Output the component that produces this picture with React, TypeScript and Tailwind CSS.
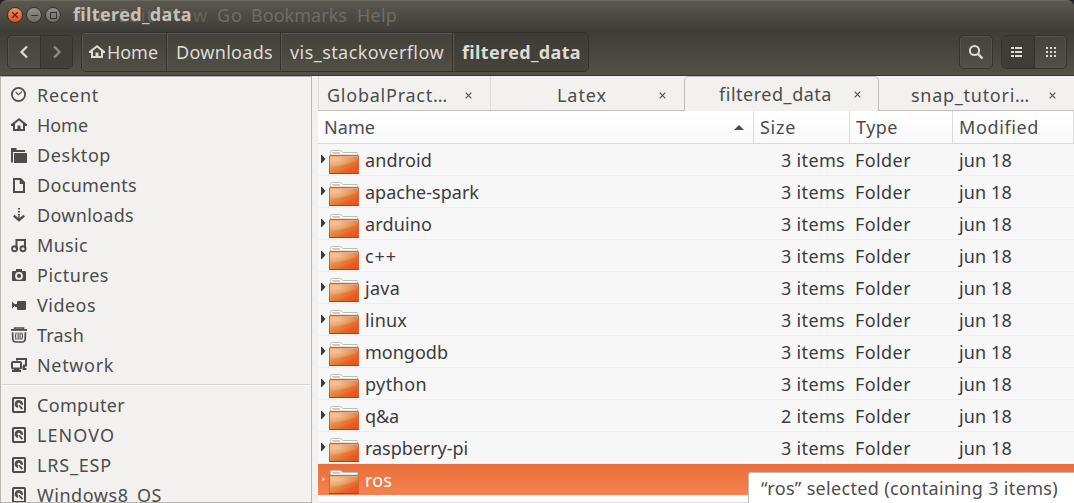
import { useLayoutEffect, useRef, type ReactNode } from "react";

/** A single-line label whose tracking is adjusted to fill a given width. */
function Label({ text, w, className = "" }: { text: string; w: number; className?: string }) {
  const ref = useRef<HTMLSpanElement>(null);
  useLayoutEffect(() => {
    const el = ref.current;
    if (!el) return;
    el.style.letterSpacing = "0px";
    const range = document.createRange();
    range.selectNodeContents(el);
    const natural = range.getBoundingClientRect().width;
    el.style.letterSpacing = `${(w - natural) / text.length}px`;
  }, [text, w]);
  return (
    <span ref={ref} className={`inline-block shrink-0 whitespace-pre ${className}`}>
      {text}
    </span>
  );
}

const icons: Record<string, ReactNode> = {
  recent: (
    <>
      <circle cx="7.5" cy="7.5" r="6.6" fill="none" stroke="currentColor" strokeWidth="1.8" />
      <path d="M4.7 5 7.5 7.6 11 4.6" fill="none" stroke="currentColor" strokeWidth="1.2" />
    </>
  ),
  home: (
    <path
      fillRule="evenodd"
      d="M8 1 16 7.2V9H14V14H2V9H0V7.2ZM8 3.4 4 6.7V12H6.5V8.5H9.5V12H12V6.7Z"
    />
  ),
  desktop: <path d="M0 1H5.5V3H14V5H2V15.5H0ZM3 6H16V16H3Z" />,
  documents: (
    <path fillRule="evenodd" d="M2 1H10L14 5V16H2ZM4 3V14H12V7H8.7V3Z" />
  ),
  downloads: (
    <>
      <path d="M7 1H9V2.5H7ZM7 4H9V5.5H7ZM7 7H9V8.5H7ZM7.3 9H8.7V13H7.3Z" />
      <path d="M2.8 8.6 8 13.2 13.2 8.6" fill="none" stroke="currentColor" strokeWidth="2.3" />
    </>
  ),
  music: (
    <>
      <path d="M5.5 12V3H14V11" fill="none" stroke="currentColor" strokeWidth="2" />
      <circle cx="3.6" cy="11.7" r="2.5" fill="none" stroke="currentColor" strokeWidth="1.9" />
      <circle cx="12" cy="11.7" r="2.5" fill="none" stroke="currentColor" strokeWidth="1.9" />
    </>
  ),
  pictures: (
    <>
      <path
        fillRule="evenodd"
        d="M5 2H11V4H14Q15 4 15 5V13Q15 14 14 14H2Q1 14 1 13V5Q1 4 2 4H5ZM8 5A3.9 3.9 0 1 0 8 12.8 3.9 3.9 0 1 0 8 5Z"
      />
      <circle cx="8" cy="8.9" r="2.1" />
    </>
  ),
  videos: <path d="M1 4.5 4.5 8 1 11.8ZM4 7H6V5Q6 4 7 4H14Q15 4 15 5V12Q15 13 14 13H7Q6 13 6 12V10H4Z" />,
  trash: (
    <>
      <path d="M3.5 2.5V1H12.5V2.5" fill="none" stroke="currentColor" strokeWidth="1.5" />
      <path d="M0 2H16V3.8H0Z" />
      <path d="M1.6 5.2 1.8 12Q2.2 15 4.5 15H11.5Q13.8 15 14.2 12L14.4 5.2" fill="none" stroke="currentColor" strokeWidth="1.7" />
      <path d="M5.2 5.5Q3.6 9 5.2 12.8M10.8 5.5Q12.4 9 10.8 12.8M7.1 5.5V12.8M9.1 5.5V12.8" fill="none" stroke="currentColor" strokeWidth="1.1" />
    </>
  ),
  network: (
    <>
      <path d="M6 3.5V2H15V8.5H12" fill="none" stroke="currentColor" strokeWidth="2" />
      <path d="M11.5 9H14V11H15.5V13H11.5Z" />
      <rect x="1" y="5" width="9" height="6.5" rx="1" fill="none" stroke="currentColor" strokeWidth="2" />
      <path d="M3 12H8V13H10V15H1V13H3Z" />
    </>
  ),
  disk: (
    <>
      <rect x="2" y="1" width="12" height="14" rx="0.8" fill="none" stroke="currentColor" strokeWidth="2" />
      <path
        fillRule="evenodd"
        d="M8 3A4 4 0 0 0 5 10L7 10.9 7.3 8.6A1.5 1.5 0 1 1 9.4 7.2L11.8 8.3A4 4 0 0 0 8 3Z"
      />
      <path d="M7.6 7.8 9.5 8.6 12 11.6 10.8 12.8 8.7 10.6Z" />
    </>
  ),
};

function Icon({ name, className = "" }: { name: string; className?: string }) {
  return (
    <svg viewBox="0 0 16 16" className={`h-4 w-4 shrink-0 ${className}`} fill="currentColor">
      {icons[name]}
    </svg>
  );
}

const places: [string, string, number][] = [
  ["recent", "Recent", 62],
  ["home", "Home", 51],
  ["desktop", "Desktop", 74],
  ["documents", "Documents", 100],
  ["downloads", "Downloads", 97],
  ["music", "Music", 51],
  ["pictures", "Pictures", 72],
  ["videos", "Videos", 59],
  ["trash", "Trash", 47],
  ["network", "Network", 77],
];

const devices: [string, string, number][] = [
  ["disk", "Computer", 88],
  ["disk", "LENOVO", 78],
  ["disk", "LRS_ESP", 75],
  ["disk", "Windows8_OS", 125],
];

const folders: [string, number, string][] = [
  ["android", 67, "3 items"],
  ["apache-spark", 114, "3 items"],
  ["arduino", 67, "3 items"],
  ["c++", 32, "3 items"],
  ["java", 35, "3 items"],
  ["linux", 42, "3 items"],
  ["mongodb", 83, "3 items"],
  ["python", 62, "3 items"],
  ["q&a", 34, "2 items"],
  ["raspberry-pi", 103, "3 items"],
];

function Place({ item }: { item: [string, string, number] }) {
  return (
    <li className="flex h-[30px] items-center gap-[10px] pl-[10px]">
      <Icon name={item[0]} />
      <Label text={item[1]} w={item[2]} />
    </li>
  );
}

function FolderIcon() {
  return (
    <svg viewBox="0 0 30 26" className="h-[26px] w-[30px] shrink-0">
      <defs>
        <linearGradient id="front" x1="0" y1="0" x2="1" y2="1">
          <stop offset="0" stopColor="#ecb876" />
          <stop offset=".4" stopColor="#e39150" />
          <stop offset=".75" stopColor="#ea5c24" />
          <stop offset="1" stopColor="#ee4f1a" />
        </linearGradient>
        <radialGradient id="shine" cx=".22" cy=".3" r=".8">
          <stop offset="0" stopColor="#fbe3b4" stopOpacity=".55" />
          <stop offset="1" stopColor="#f6c89a" stopOpacity=".12" />
        </radialGradient>
      </defs>
      <path d="M1.5 7V2.5Q1.5 1.5 2.5 1.5H11.5L14 3.5H28Q28.5 3.5 28.5 4.5V7Z" fill="#fafafa" stroke="#bcbcbc" />
      <path d="M3.5 3.9H11" stroke="#f0a070" strokeWidth="1.3" />
      <path d="M2 5.5H28" stroke="#e4e4e4" />
      <rect x=".5" y="6.5" width="29" height="18" rx=".5" fill="url(#front)" stroke="#c9683f" />
      <path d="M1 7.5H29" stroke="#efaa7c" strokeWidth="1" />
      <path d="M1 8H29V11Q21 16 1 18Z" fill="url(#shine)" />
      <path d="M0 24.5H30" stroke="#b83b16" />
    </svg>
  );
}

function FolderRow({ name, w, items, selected = false }: { name: string; w: number; items?: string; selected?: boolean }) {
  return (
    <div
      className={
        selected
          ? "flex h-8 shrink-0 border-b border-white bg-linear-to-b from-[#e86f3c] to-[#f6824f] text-white"
          : "flex h-8 shrink-0 border-b border-[#efefef] bg-[#f7f7f7] text-[#3c3c3c]"
      }
    >
      <div className="flex w-[435px] items-center pl-[3px]">
        <svg viewBox="0 0 8 10" className="mb-px h-[10px] w-2 shrink-0" fill="currentColor">
          {selected ? <path d="M1.5 3.5V7L4 5.2Z" /> : <path d="M0 1V9H1L4.5 5 1 1Z" />}
        </svg>
        <div className="mt-[4px] flex">
          <FolderIcon />
        </div>
        <Label text={name} w={w} className="ml-[6px]" />
      </div>
      {items && (
        <>
          <div className="flex w-24 items-center justify-end pr-1">
            <Label text={items} w={64} />
          </div>
          <div className="flex w-[103px] items-center pl-[6px]">
            <Label text="Folder" w={56} />
          </div>
          <div className="flex items-center pl-[7px]">
            <Label text="jun 18" w={53} />
          </div>
        </>
      )}
    </div>
  );
}

function Close({ className }: { className: string }) {
  return (
    <svg viewBox="0 0 7 7" className={`h-[7px] w-[7px] shrink-0 ${className}`} stroke="#555" strokeWidth="1.2">
      <path d="M.7.7 6.3 6.3M6.3.7.7 6.3" />
    </svg>
  );
}

export default function App() {
  return (
    <div className="flex h-[503px] w-[1074px] flex-col overflow-hidden bg-[#23222a] font-['Noto_Sans',sans-serif] text-[18px] leading-6 text-[#4c4c4c]">
      <header className="shrink-0 rounded-t-lg">
        <div className="flex h-[29px] items-center rounded-t-[7px] border-t border-[#6b685f] bg-linear-to-b from-[#5b584e] to-[#403f3a] pl-[7px]">
          <div className="flex gap-1">
            <span className="flex h-4 w-4 items-center justify-center rounded-full border border-[#33312d] bg-linear-to-b from-[#f68a65] to-[#e34d19]">
              <svg viewBox="0 0 8 8" className="h-2 w-2" stroke="#46291e" strokeWidth="1.3"><path d="M1.2 1.2 6.8 6.8M6.8 1.2 1.2 6.8" /></svg>
            </span>
            <span className="ml-[-1px] flex h-4 w-4 items-center justify-center rounded-full border border-[#33312d] bg-linear-to-b from-[#949188] to-[#6e6b63]">
              <span className="h-px w-[7px] bg-[#33312d]" />
            </span>
            <span className="ml-[-1px] flex h-4 w-4 items-center justify-center rounded-full border border-[#33312d] bg-linear-to-b from-[#949188] to-[#6e6b63]">
              <span className="h-[7px] w-[7px] border border-[#33312d]" />
            </span>
          </div>
          <div className="relative ml-[12px] flex text-[#706d64]">
            <span className="flex w-[144px] gap-[10px] pl-1 text-[#66635a]">
              <Label text="File" w={31} />
              <Label text="Edit" w={36} />
              <Label text="View" w={47} className="ml-[-2px]" />
            </span>
            <Label text="Go" w={26} />
            <Label text="Bookmarks" w={96} className="ml-[8px]" />
            <Label text="Help" w={40} className="ml-[10px]" />
            <span className="absolute top-[-1px] left-0 font-bold text-[#c6c2b8]">
              <Label text="filtered_data" w={119} />
            </span>
          </div>
        </div>
        <div className="flex h-[47px] items-start border-b border-[#37352f] bg-linear-to-b from-[#3d3c37] to-[#535046] px-[7px] text-[#dfdbd2]">
          <div className="mt-[6px] flex h-[34px] w-[66px] overflow-hidden rounded-[5px] border border-[#33322e] bg-linear-to-b from-[#45433e] to-[#514f46] shadow-[inset_0_0_0_1px_#56534a]">
            <span className="flex w-8 items-center justify-center">
              <svg viewBox="0 0 10 14" className="h-[14px] w-[10px]" fill="none" stroke="#dfdbd2" strokeWidth="2.2"><path d="M8 1.5 2.5 7 8 12.5" /></svg>
            </span>
            <span className="flex flex-1 items-center justify-center border-l border-[#33322e] bg-[#403f39]">
              <svg viewBox="0 0 10 14" className="h-[14px] w-[10px]" fill="none" stroke="#918e85" strokeWidth="2.2"><path d="M2 1.5 7.5 7 2 12.5" /></svg>
            </span>
          </div>
          <nav className="mt-[3px] ml-2 flex h-10 w-[508px] overflow-hidden rounded-[5px] border border-[#33322e] bg-linear-to-b from-[#42413b] to-[#514f46]">
            <span className="flex w-[85px] items-center border-t border-l border-[#595750] pb-[2px] pl-[6px]">
              <Icon name="home" />
              <Label text="Home" w={51} className="ml-[2px]" />
            </span>
            <span className="flex w-[114px] items-center border-t border-l border-[#595750] pb-[2px] pl-2 shadow-[-1px_0_#33322e]">
              <Label text="Downloads" w={97} />
            </span>
            <span className="flex w-[172px] items-center border-t border-l border-[#595750] pb-[2px] pl-2 shadow-[-1px_0_#33322e]">
              <Label text="vis_stackoverflow" w={154} />
            </span>
            <span className="flex flex-1 items-center border-l border-[#57554d] bg-linear-to-b from-[#3d3c37] to-[#45433c] pb-px pl-[8px] font-bold shadow-[-1px_0_#33322e]">
              <Label text="filtered_data" w={119} />
            </span>
          </nav>
          <span className="mt-[6px] ml-auto flex h-[34px] w-[34px] items-center justify-center rounded-[5px] border border-[#33322e] bg-linear-to-b from-[#45433e] to-[#514f46] shadow-[inset_0_0_0_1px_#56534a]">
            <svg viewBox="0 0 16 16" className="h-4 w-4" fill="none" stroke="#dfdbd2"><circle cx="6.5" cy="6.5" r="4.6" strokeWidth="2" /><path d="M10 10 14.5 14.5" strokeWidth="2.4" /></svg>
          </span>
          <div className="mt-[6px] ml-2 flex h-[34px] w-[66px] overflow-hidden rounded-[5px] border border-[#33322e] bg-linear-to-b from-[#45433e] to-[#514f46] shadow-[inset_0_0_0_1px_#56534a]">
            <span className="flex w-8 items-center justify-center bg-[#3e3d38] pr-[2px]">
              <svg viewBox="0 0 12 10" className="h-[10px] w-3" fill="#dfdbd2"><path d="M0 0h3v2H0zM4 0h7v2H4zM0 4h3v2H0zM4 4h7v2H4zM0 8h3v2H0zM4 8h7v2H4z" /></svg>
            </span>
            <span className="flex flex-1 items-center justify-center border-l border-[#33322e] pl-px">
              <svg viewBox="0 0 10 10" className="h-[10px] w-[10px]" fill="#dfdbd2"><path d="M0 0h2v2H0zM4 0h2v2H4zM8 0h2v2H8zM0 4h2v2H0zM4 4h2v2H4zM8 4h2v2H8zM0 8h2v2H0zM4 8h2v2H4zM8 8h2v2H8z" /></svg>
            </span>
          </div>
        </div>
      </header>

      <div className="flex min-h-0 flex-1 bg-[#f2f1f0]">
        <aside className="flex w-[312px] shrink-0 flex-col overflow-hidden border border-[#b9b6b0]">
          <ul className="pt-[3px]">
            {places.map((p) => <Place key={p[1]} item={p} />)}
          </ul>
          <div className="mt-1 mb-[4px] h-[2px] shrink-0 border-t border-[#d8d6d3] bg-white" />
          <ul>
            {devices.map((p) => <Place key={p[1]} item={p} />)}
          </ul>
        </aside>

        <main className="relative ml-[6px] flex min-w-0 flex-1 flex-col overflow-hidden bg-white">
          <div className="flex h-[35px] shrink-0 bg-[#f2f1f0]">
            <div className="flex w-[173px] items-center border-r border-b border-l border-[#c4c2be] border-x-[#dddbd8] pt-[4px] pl-[8px]">
              <Label text="GlobalPract…" w={121} />
              <Close className="ml-[17px]" />
            </div>
            <div className="flex w-[193px] items-center border-b border-[#c4c2be] pt-[4px] pl-[66px]">
              <Label text="Latex" w={50} />
              <Close className="ml-[52px]" />
            </div>
            <div className="flex w-[195px] items-center rounded-t-[5px] border-x border-t border-[#bfbdb9] pl-[34px]">
              <Label text="filtered_data" w={113} />
              <Close className="ml-[22px]" />
            </div>
            <div className="flex flex-1 items-center border-b border-[#c4c2be] pt-[4px] pl-[32px]">
              <Label text="snap_tutori…" w={119} />
              <Close className="ml-[19px]" />
            </div>
          </div>

          <div className="flex h-[33px] shrink-0 items-stretch border-b border-[#d9d9d9] bg-linear-to-b from-white to-[#f9f9f9] text-[#4c4c4c]">
            <div className="flex w-[436px] items-center border-r border-[#dcdcdc] pl-[6px]">
              <Label text="Name" w={51} />
              <svg viewBox="0 0 10 5" className="mr-[9px] ml-auto h-[5px] w-[10px]" fill="#4c4c4c"><path d="M5 0 10 5H0Z" /></svg>
            </div>
            <div className="flex w-24 items-center border-r border-[#dcdcdc] pl-[6px]"><Label text="Size" w={36} /></div>
            <div className="flex w-[103px] items-center border-r border-[#dcdcdc] pl-[6px]"><Label text="Type" w={42} /></div>
            <div className="flex flex-1 items-center border-r border-[#dcdcdc] pl-[6px]"><Label text="Modified" w={80} /></div>
          </div>

          {folders.map((f) => <FolderRow key={f[0]} name={f[0]} w={f[1]} items={f[2]} />)}
          <FolderRow name="ros" w={27} selected />
          <div className="mt-[6px] h-px shrink-0 bg-[#ddd]" />

          <div className="absolute right-0 bottom-0 flex h-[31px] w-[326px] items-center rounded-tl-[3px] border-t border-l border-[#bdbbb7] bg-white pl-[12px]">
            <Label text="“ros” selected (containing 3 items)" w={297} />
          </div>
        </main>
      </div>
    </div>
  );
}
